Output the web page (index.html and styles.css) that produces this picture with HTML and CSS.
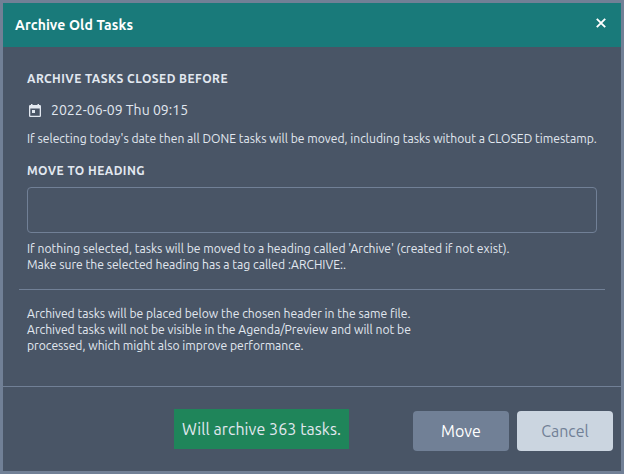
FILE: index.html
```html
<!DOCTYPE html>
<html lang="en">
<head>
<meta charset="utf-8">
<title>Archive Old Tasks</title>
<link rel="stylesheet" href="styles.css">
</head>
<body>
<div class="dialog">
  <header class="header">
    <h1 class="title">Archive Old Tasks</h1>
    <svg class="close" viewBox="0 0 10 10"><path d="M.8.8l8.4 8.4M9.2.8L.8 9.2"/></svg>
  </header>
  <main class="body">
    <section class="group">
      <h2 class="label">Archive tasks closed before</h2>
      <div class="date-row">
        <svg class="calendar" viewBox="0 0 12 13"><path fill-rule="evenodd" d="M2 0h1.5v1h5V0H10v1h.8Q12 1 12 2.2v9.6Q12 13 10.800 13H1.200Q0 13 0 11.800V2.200Q0 1 1.200 1H2zM1.300 4.400v7.300h9.400V4.400zM3 6h3v3H3z"/></svg>
        <span class="date">2022-06-09 Thu 09:15</span>
      </div>
      <p class="hint">If selecting today's date then all DONE tasks will be moved, including tasks without a CLOSED timestamp.</p>
    </section>
    <section class="group second">
      <h2 class="label">Move to heading</h2>
      <div class="select" role="combobox"></div>
      <p class="hint"><span class="line">If nothing selected, tasks will be moved to a heading called 'Archive' (created if not exist).</span><span class="line">Make sure the selected heading has a tag called :ARCHIVE:.</span></p>
    </section>
    <hr class="divider">
    <p class="hint note"><span class="line">Archived tasks will be placed below the chosen header in the same file.</span><span class="line">Archived tasks will not be visible in the Agenda/Preview and will not be</span><span class="line">processed, which might also improve performance.</span></p>
  </main>
  <footer class="footer">
    <div class="status"><span>Will archive 363 tasks.</span></div>
    <button class="btn move"><span>Move</span></button>
    <button class="btn cancel"><span>Cancel</span></button>
  </footer>
</div>
</body>
</html>
```
FILE: styles.css
```css
* { box-sizing: border-box; margin: 0; padding: 0; }
body { width: 624px; height: 474px; overflow: hidden; font-family: Ubuntu, "Noto Sans", sans-serif; color: #e2e8f0; }
.dialog { width: 624px; height: 474px; border: 3px solid #718096; background: #495566; display: flex; flex-direction: column; }
.header { height: 44px; flex: none; background: #197a7a; display: flex; justify-content: space-between; padding: 12px 15px 0 12px; }
.title { font-size: 14px; line-height: 20px; font-weight: 700; color: #fff; white-space: nowrap; letter-spacing: .12px; }
.close { width: 10px; height: 10px; margin-top: 3px; stroke: #fff; stroke-width: 1.900; fill: none; }
.body { height: 339px; flex: none; padding: 16px 16px 0; }
.group { padding: 8px 8px 0; }
.second { padding-top: 16px; }
.label { height: 16px; font-size: 12px; line-height: 16px; font-weight: 700; text-transform: uppercase; white-space: nowrap; letter-spacing: .44px; }
.date-row { display: flex; align-items: center; height: 24px; margin: 11px 0 9px; padding-left: 2px; }
.calendar { width: 12px; height: 13px; margin-right: 10px; fill: #e2e8f0; }
.date { font-size: 14px; line-height: 20px; white-space: nowrap; letter-spacing: .03px; }
.hint { font-size: 12.150px; line-height: 16px; white-space: nowrap; }
.line { display: block; }
.select { height: 46px; margin: 8px 0; border: 1px solid #718096; border-radius: 4px; }
.divider { border: 0; height: 1px; background: #718096; margin: 16px 0; }
.note { padding: 0 8px; }
.footer { flex: 1; border-top: 1px solid #718096; display: flex; justify-content: flex-end; padding: 22px 8px 0; }
.status { width: 175px; height: 40px; line-height: 40px; background: #1f855a; font-size: 16px; padding-left: 8px; margin-right: 64px; white-space: nowrap; letter-spacing: .08px; }
.btn { width: 96px; height: 40px; margin-top: 2px; border: 0; border-radius: 4px; font: 16px/40px Ubuntu, "Noto Sans", sans-serif; }
.move { background: #718096; color: #fff; margin-right: 8px; }
.cancel { background: #cbd5e0; color: #718096; }
```
